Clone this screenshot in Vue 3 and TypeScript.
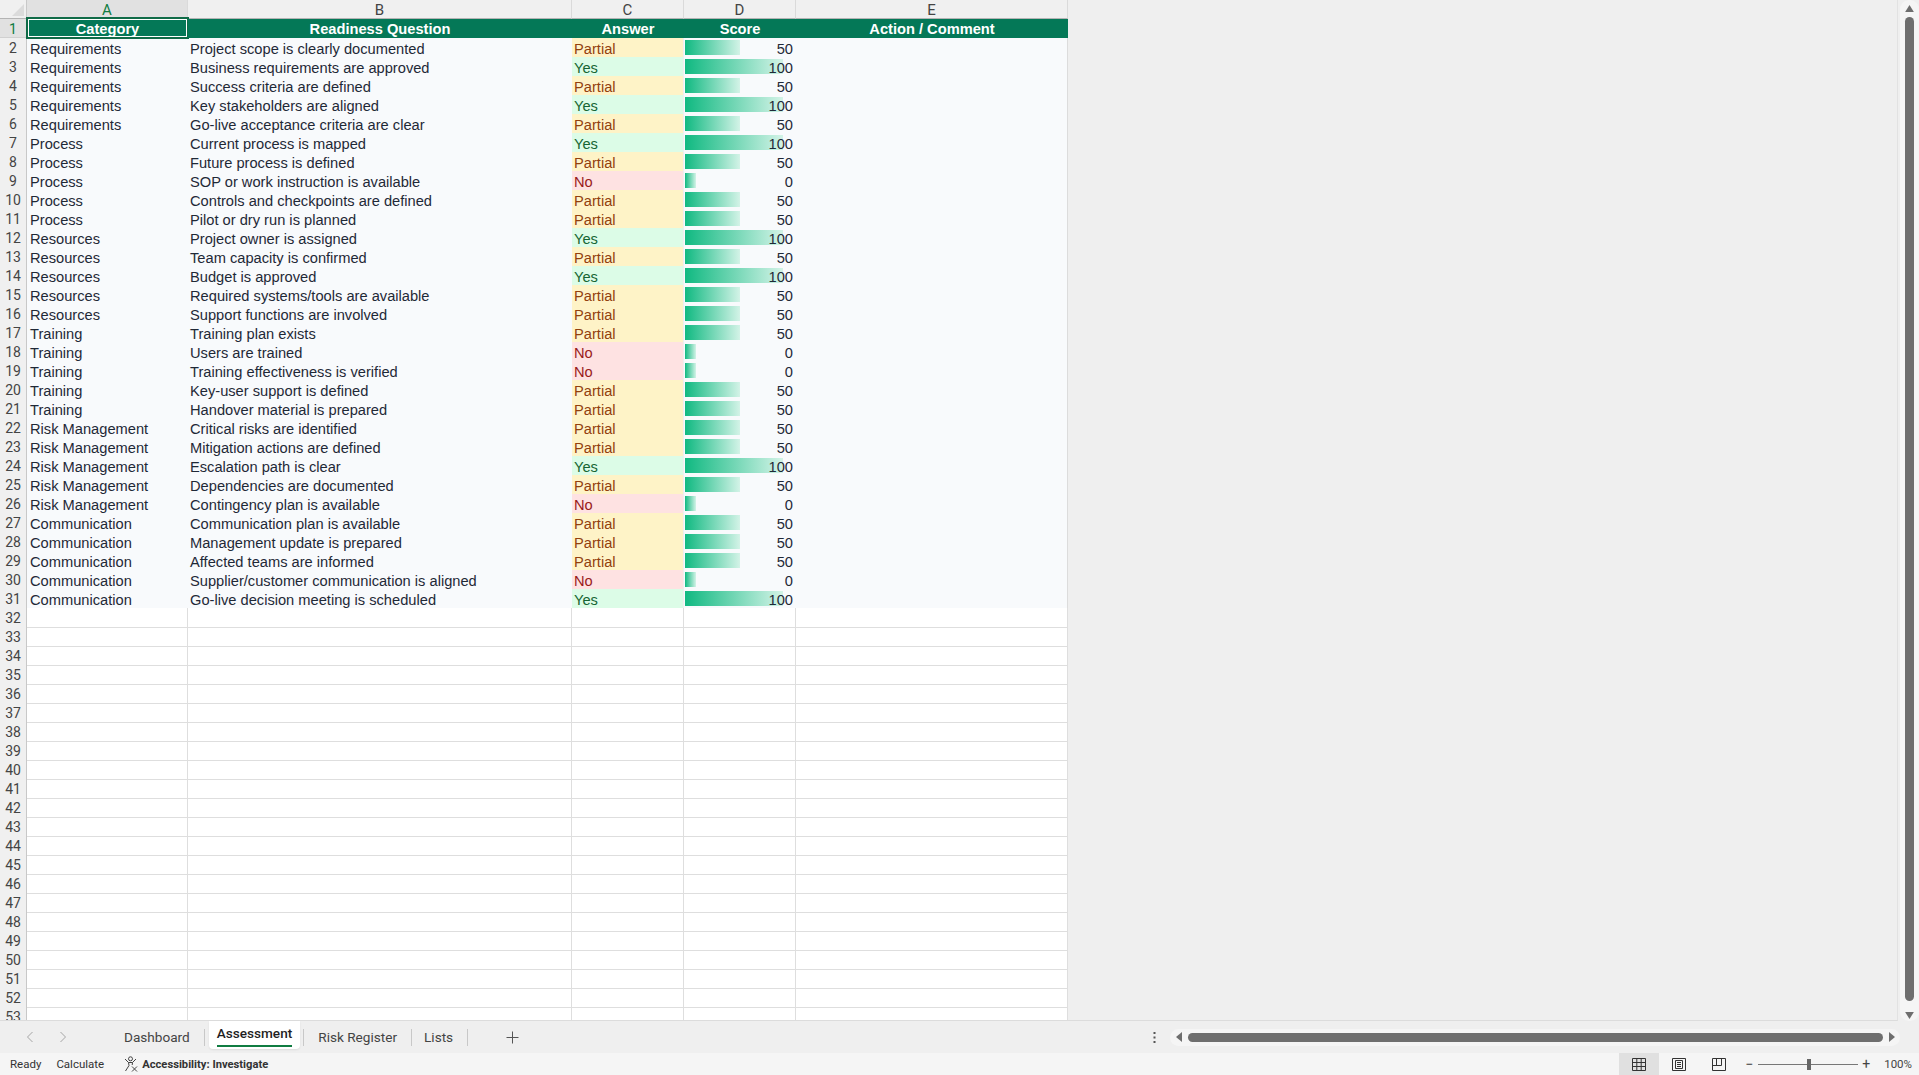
<template>
  <div class="app">
    <div class="main">
      <div class="sheet">
        <!-- column letters -->
        <div class="row col-head">
          <div class="corner"><span class="corner-tri"></span></div>
          <div v-for="c in columns" :key="c" class="col-letter" :class="{ sel: c === 'A' }">{{ c }}</div>
        </div>

        <!-- header row -->
        <div class="row title-row">
          <div class="row-num sel">1</div>
          <div v-for="(h, i) in headers" :key="h" class="title-cell" :class="{ active: i === 0 }">{{ h }}</div>
        </div>

        <!-- filled rows -->
        <div v-for="(r, i) in rows" :key="i" class="row data-row">
          <div class="row-num">{{ i + 2 }}</div>
          <div class="cell first">{{ r[0] }}</div>
          <div class="cell">{{ r[1] }}</div>
          <div class="cell answer" :class="r[2].toLowerCase()">{{ r[2] }}</div>
          <div class="cell score">
            <span class="bar" :style="{ width: barWidth(scoreOf(r[2])) + 'px' }"></span>
            <span class="score-num">{{ scoreOf(r[2]) }}</span>
          </div>
          <div class="cell last"></div>
        </div>

        <!-- empty rows -->
        <div v-for="n in emptyRows" :key="n" class="row empty-row">
          <div class="row-num">{{ n }}</div>
          <div class="cell"></div>
          <div class="cell"></div>
          <div class="cell"></div>
          <div class="cell"></div>
          <div class="cell last"></div>
        </div>
      </div>

      <div class="vscroll">
        <svg class="v-arrow" width="9" height="7" viewBox="0 0 10 8"><path d="M5 0 L10 8 L0 8 Z" fill="#6e6e6e" /></svg>
        <div class="v-thumb"></div>
        <svg class="v-arrow down" width="9" height="7" viewBox="0 0 10 8"><path d="M5 8 L10 0 L0 0 Z" fill="#6e6e6e" /></svg>
      </div>
    </div>

    <div class="tabbar">
      <div class="tab-nav">
        <svg width="8" height="12" viewBox="0 0 8 12"><path d="M6.5 1 L1.5 6 L6.5 11" fill="none" stroke="#a6a6a6" stroke-width="1" /></svg>
        <svg width="8" height="12" viewBox="0 0 8 12"><path d="M1.5 1 L6.5 6 L1.5 11" fill="none" stroke="#a6a6a6" stroke-width="1" /></svg>
      </div>
      <div class="tabs">
        <div class="tab">Dashboard</div>
        <span class="tab-sep"></span>
        <div class="tab current"><span>Assessment</span></div>
        <span class="tab-sep"></span>
        <div class="tab">Risk Register</div>
        <span class="tab-sep before-lists"></span>
        <div class="tab">Lists</div>
        <span class="tab-sep"></span>
        <svg class="tab-add" width="13" height="13" viewBox="0 0 13 13"><path d="M6.5 0.5 V12.5 M0.5 6.5 H12.5" stroke="#555" stroke-width="1" /></svg>
      </div>
      <div class="tab-right">
        <svg class="dots" width="3" height="13" viewBox="0 0 3 13"><path d="M0.5 1 h2 v2 h-2 z M0.5 5.5 h2 v2 h-2 z M0.5 10 h2 v2 h-2 z" fill="#555" /></svg>
        <div class="hscroll">
          <svg width="6" height="10" viewBox="0 0 6 10"><path d="M0 5 L6 0 L6 10 Z" fill="#6e6e6e" /></svg>
          <div class="h-thumb"></div>
          <svg width="6" height="10" viewBox="0 0 6 10"><path d="M6 5 L0 0 L0 10 Z" fill="#6e6e6e" /></svg>
        </div>
      </div>
    </div>

    <div class="statusbar">
      <span class="st-ready">Ready</span>
      <span class="st-calc">Calculate</span>
      <svg class="st-icon" width="16" height="16" viewBox="0 0 16 16" fill="none" stroke="#444" stroke-width="1">
        <circle cx="7.5" cy="2.8" r="2" />
        <path d="M2 3 L5.5 6.5 H9.5 L13 3" />
        <path d="M5.5 6.5 L6 9.5 L2.5 15 M9.5 6.5 L9.2 9" />
        <path d="M9 10.5 L14 15.5 M14 10.5 L9 15.5" />
      </svg>
      <span class="st-acc">Accessibility: Investigate</span>
      <div class="st-right">
        <div class="view on">
          <svg width="14" height="13" viewBox="0 0 14 13" fill="none" stroke="#333" stroke-width="1"><path d="M0.5 0.5 H13.5 V12.5 H0.5 Z M0.5 4.5 H13.5 M0.5 8.5 H13.5 M4.8 0.5 V12.5 M9.2 0.5 V12.5" /></svg>
        </div>
        <div class="view">
          <svg width="14" height="13" viewBox="0 0 14 13" fill="none" stroke="#333" stroke-width="1"><path d="M0.5 0.5 H13.5 V12.5 H0.5 Z M3.5 2.5 H10.5 V10.5 H3.5 Z M5 4.5 H9 M5 6.5 H9 M5 8.5 H9" /></svg>
        </div>
        <div class="view">
          <svg width="14" height="13" viewBox="0 0 14 13" fill="none" stroke="#333" stroke-width="1"><path d="M0.5 0.5 H13.5 V12.5 H0.5 Z M0.5 7.5 H9.5 V0.5 M4.5 0.5 V7.5" /></svg>
        </div>
        <div class="zoom">
          <span class="zoom-btn">−</span>
          <div class="slider"><span class="knob"></span></div>
          <span class="zoom-btn plus">+</span>
        </div>
        <span class="zoom-val">100%</span>
      </div>
    </div>
  </div>
</template>

<script setup lang="ts">
  type Row = [string, string, string];

  const columns = ['A', 'B', 'C', 'D', 'E'];
  const headers = ['Category', 'Readiness Question', 'Answer', 'Score', 'Action / Comment'];

  const rows: Row[] = [
    ['Requirements', 'Project scope is clearly documented', 'Partial'],
    ['Requirements', 'Business requirements are approved', 'Yes'],
    ['Requirements', 'Success criteria are defined', 'Partial'],
    ['Requirements', 'Key stakeholders are aligned', 'Yes'],
    ['Requirements', 'Go-live acceptance criteria are clear', 'Partial'],
    ['Process', 'Current process is mapped', 'Yes'],
    ['Process', 'Future process is defined', 'Partial'],
    ['Process', 'SOP or work instruction is available', 'No'],
    ['Process', 'Controls and checkpoints are defined', 'Partial'],
    ['Process', 'Pilot or dry run is planned', 'Partial'],
    ['Resources', 'Project owner is assigned', 'Yes'],
    ['Resources', 'Team capacity is confirmed', 'Partial'],
    ['Resources', 'Budget is approved', 'Yes'],
    ['Resources', 'Required systems/tools are available', 'Partial'],
    ['Resources', 'Support functions are involved', 'Partial'],
    ['Training', 'Training plan exists', 'Partial'],
    ['Training', 'Users are trained', 'No'],
    ['Training', 'Training effectiveness is verified', 'No'],
    ['Training', 'Key-user support is defined', 'Partial'],
    ['Training', 'Handover material is prepared', 'Partial'],
    ['Risk Management', 'Critical risks are identified', 'Partial'],
    ['Risk Management', 'Mitigation actions are defined', 'Partial'],
    ['Risk Management', 'Escalation path is clear', 'Yes'],
    ['Risk Management', 'Dependencies are documented', 'Partial'],
    ['Risk Management', 'Contingency plan is available', 'No'],
    ['Communication', 'Communication plan is available', 'Partial'],
    ['Communication', 'Management update is prepared', 'Partial'],
    ['Communication', 'Affected teams are informed', 'Partial'],
    ['Communication', 'Supplier/customer communication is aligned', 'No'],
    ['Communication', 'Go-live decision meeting is scheduled', 'Yes']
  ];

  // 32 到 53 行是空行
  const emptyRows = Array.from({ length: 22 }, (_, i) => i + 32);

  const scoreOf = (answer: string) => {
    if (answer === 'Yes') return 100;
    if (answer === 'Partial') return 50;
    return 0;
  };

  // data bar 在 0 分时也有一小段
  const barWidth = (score: number) => 11 + score * 0.87;
</script>

<style>
  html, body {
    margin: 0;
    overflow: hidden;
    background: #efefef;
  }
</style>

<style scoped>
  .app {
    width: 1919px;
    height: 1075px;
    display: flex;
    flex-direction: column;
    background: #efefef;
    overflow: hidden;
    font-family: Roboto, "Noto Sans", "Liberation Sans", sans-serif;
    color: #333;
  }

  .main {
    display: flex;
    height: 1021px;
    flex: none;
  }

  .sheet {
    width: 1898px;
    height: 1021px;
    overflow: hidden;
    border-right: 1px solid #e2e2e2;
    border-bottom: 1px solid #dcdcdc;
    box-sizing: border-box;
  }

  .row {
    display: grid;
    grid-template-columns: 27px 161px 384px 112px 112px 272px;
    grid-template-rows: 19px;
    width: 1068px;
    height: 19px;
  }

  /* 列标题 */
  .col-head .col-letter,
  .corner {
    box-sizing: border-box;
    height: 19px;
    background: #f0f0f0;
    border-bottom: 1px solid #b4b4b4;
    border-right: 1px solid #dadada;
  }

  .corner {
    position: relative;
    border-right: 1px solid #c8c8c8;
  }

  .corner-tri {
    position: absolute;
    right: 2px;
    bottom: 2px;
    width: 0;
    height: 0;
    border-style: solid;
    border-width: 0 0 12px 12px;
    border-color: transparent transparent #dbdbdb transparent;
  }

  .col-letter {
    text-align: center;
    font-size: 15px;
    line-height: 20px;
    color: #444;
  }

  .col-head .col-letter.sel {
    background: #e1e1e1;
    color: #107c41;
    border-bottom: 1px solid #107c41;
  }

  .row-num {
    box-sizing: border-box;
    background: #f0f0f0;
    border-right: 1px solid #c8c8c8;
    text-align: center;
    font-size: 14px;
    line-height: 21px;
    color: #444;
    overflow: hidden;
  }

  .row-num.sel {
    background: #e1e1e1;
    color: #107c41;
    border-bottom: 1px solid #d0d0d0;
  }

  /* 表头 */
  .title-cell {
    background: #047857;
    color: #fff;
    font-family: "Liberation Sans", Arial, sans-serif;
    font-weight: 700;
    font-size: 14.67px;
    line-height: 20px;
    text-align: center;
    position: relative;
    white-space: nowrap;
  }

  .title-cell.active::after {
    content: '';
    position: absolute;
    inset: -2px -1px -1px -1px;
    border: 2px solid #0f6b47;
    box-shadow: inset 0 0 0 1px #fff;
  }

  /* 单元格 */
  .cell {
    box-sizing: border-box;
    padding-left: 2px;
    font-family: "Liberation Sans", Arial, sans-serif;
    font-size: 14.67px;
    line-height: 22px;
    color: #1f2937;
    white-space: nowrap;
    overflow: hidden;
  }

  .cell.first {
    padding-left: 3px;
  }

  .data-row .cell {
    background: #f8fafc;
  }

  .data-row .answer {
    margin-right: 1px;
  }

  .data-row .answer.partial {
    background: #fef3c7;
    color: #92400e;
  }

  .data-row .answer.yes {
    background: #dcfce7;
    color: #166534;
  }

  .data-row .answer.no {
    background: #fee2e2;
    color: #991b1b;
  }

  .score {
    position: relative;
    text-align: right;
    padding-right: 3px;
  }

  .bar {
    position: absolute;
    left: 1px;
    top: 2px;
    height: 15px;
    background: linear-gradient(90deg, #10b981, #d3f3e7);
  }

  .score-num {
    position: relative;
  }

  .last {
    border-right: 1px solid #dcdcdc;
  }

  .empty-row .cell {
    background: #fff;
    border-right: 1px solid #dedede;
  }

  /* 网格线画在下一行的第一个像素，第 32 行上方没有线 */
  .empty-row + .empty-row .cell {
    border-top: 1px solid #dedede;
  }

  /* 滚动条 */
  .vscroll {
    width: 19px;
    height: 1021px;
    margin-left: 2px;
    background: #f5f5f5;
    border-radius: 9px;
    display: flex;
    flex-direction: column;
    align-items: center;
    padding-top: 5px;
    gap: 5px;
    box-sizing: border-box;
    flex: none;
  }

  .v-arrow {
    flex: none;
  }

  .v-arrow.down {
    margin-top: 6px;
  }

  .v-thumb {
    width: 9px;
    height: 984px;
    border-radius: 5px;
    background: #6e6e6e;
    flex: none;
  }

  .tabbar {
    height: 32px;
    display: flex;
    align-items: center;
    background: #efefef;
    flex: none;
  }

  .tab-nav {
    display: flex;
    gap: 25px;
    margin-left: 26px;
    width: 98px;
    flex: none;
  }

  .tabs {
    display: flex;
    align-items: center;
    font-size: 13.6px;
    color: #444;
  }

  .tab {
    white-space: nowrap;
    padding-right: 14px;
  }

  .tab-sep {
    width: 1px;
    height: 17px;
    background: #c8c8c8;
    margin-right: 14px;
    flex: none;
  }

  .tab-sep.before-lists {
    margin-right: 12px;
  }

  .tab.current {
    background: #fff;
    height: 28px;
    margin: -4px 3px 0 -10px;
    padding: 0 8px;
    border-radius: 0 0 4px 4px;
    color: #1f1f1f;
    font-weight: 500;
    box-shadow: 0 1px 2px rgba(0, 0, 0, 0.08);
    box-sizing: border-box;
  }

  .tab.current span {
    display: block;
    height: 24px;
    line-height: 24px;
    border-bottom: 2px solid #107c41;
  }

  .tab-add {
    margin-left: 24px;
  }

  .tab-right {
    display: flex;
    align-items: center;
    gap: 14px;
    margin-left: auto;
    margin-right: 19px;
  }

  .hscroll {
    width: 730px;
    height: 17px;
    background: #f5f5f5;
    border-radius: 9px;
    display: flex;
    align-items: center;
    justify-content: center;
    gap: 6px;
  }

  .h-thumb {
    width: 695px;
    height: 9px;
    border-radius: 5px;
    background: #6e6e6e;
  }

  .statusbar {
    flex: 1;
    display: flex;
    align-items: center;
    background: #f5f5f5;
    font-size: 11.5px;
    color: #333;
    padding-left: 10px;
  }

  .st-calc {
    margin-left: 15px;
  }

  .st-icon {
    margin-left: 19px;
  }

  .st-acc {
    margin-left: 3px;
    font-size: 11.2px;
    font-weight: 700;
  }

  .st-right {
    margin-left: auto;
    display: flex;
    align-items: center;
    height: 100%;
  }

  .view {
    width: 40px;
    height: 100%;
    display: flex;
    align-items: center;
    justify-content: center;
  }

  .view.on {
    background: #e0e0e0;
  }

  .zoom {
    display: flex;
    align-items: center;
    margin-left: 6px;
    gap: 5px;
  }

  .zoom-btn {
    width: 8px;
    text-align: center;
    font-size: 14px;
    color: #444;
    line-height: 1;
  }

  .zoom-btn.plus {
    margin-left: -1px;
  }

  .slider {
    width: 100px;
    height: 1px;
    background: #777;
    position: relative;
  }

  .knob {
    position: absolute;
    left: 49px;
    top: -5px;
    width: 4px;
    height: 11px;
    background: #666;
  }

  .zoom-val {
    margin-left: 14px;
    margin-right: 7px;
    font-size: 11.5px;
    color: #444;
  }
</style>
